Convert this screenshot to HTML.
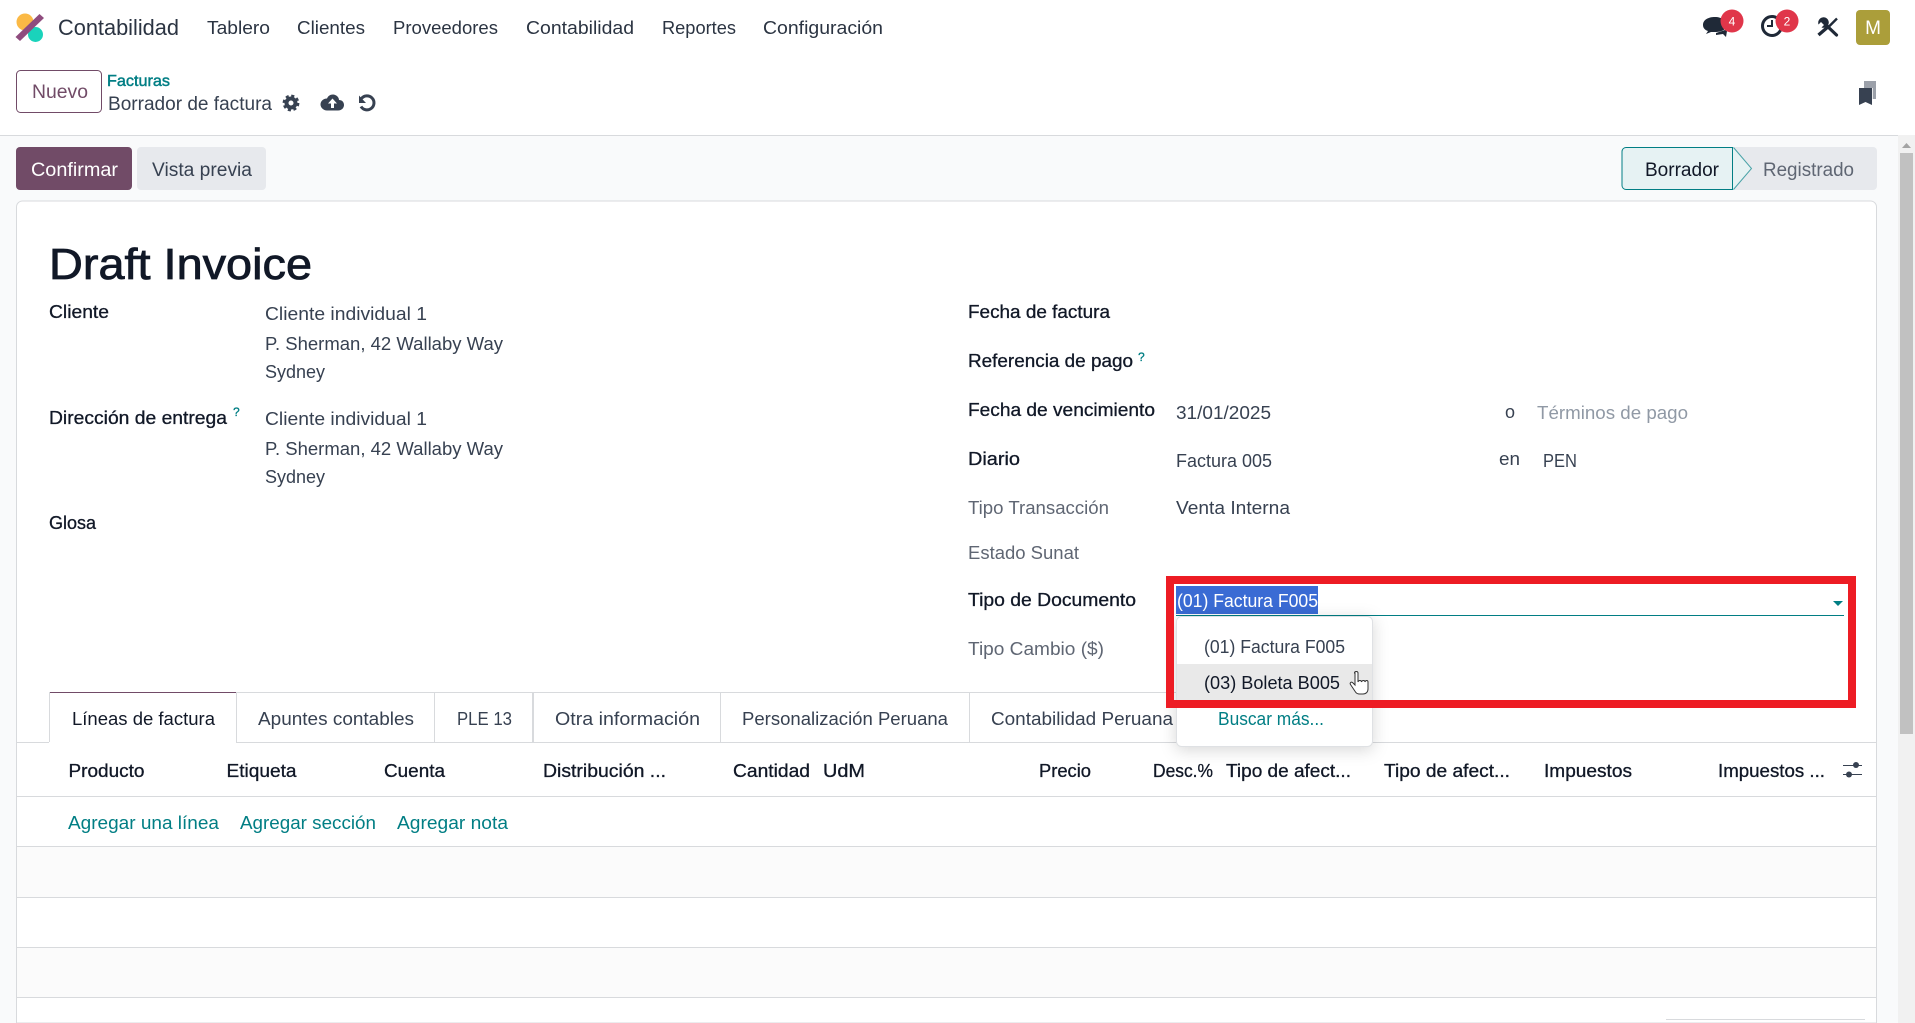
<!DOCTYPE html>
<html lang="es">
<head>
<meta charset="utf-8">
<title>Contabilidad - Borrador de factura</title>
<style>
html,body{margin:0;padding:0;width:1915px;height:1023px;overflow:hidden;background:#fff}
svg{display:block;position:absolute;left:0;top:0}
text{font-family:"Liberation Sans","DejaVu Sans",sans-serif;font-size:18px;fill:#374151;white-space:pre}
.d{fill:#111827}
.m{fill:#111827;stroke:#111827;stroke-width:.3px}
.g{fill:#5f6673}
.l{fill:#9099a5}
.t{fill:#017e84}
.n{font-size:18.500px;fill:#2b3442}
.dd{filter:drop-shadow(0 3px 8px rgba(0,0,0,.16))}
</style>
</head>
<body>
<svg width="1915" height="1023" viewBox="0 0 1915 1023" xmlns="http://www.w3.org/2000/svg">
<rect width="1915" height="1023" fill="#fff"/>

<!-- Page background -->
<rect x="0" y="135" width="1898" height="888" fill="#f9fafb"/>
<rect x="0" y="135" width="1898" height="1" fill="#d8dadd"/>

<!-- Navbar -->
<g>
<circle cx="25" cy="22" r="8.500" fill="#fbb945"/>
<circle cx="35.500" cy="34.500" r="7.500" fill="#1ad3bb"/>
<path d="M39.500 14 L44 18 L20 41 L15.500 37 Z" fill="#8f4c7e"/>
</g>
<text x="58" y="35" style="font-size:22px;fill:#2b3442" textLength="121" lengthAdjust="spacingAndGlyphs">Contabilidad</text>
<text class="n" x="207" y="34" textLength="63" lengthAdjust="spacingAndGlyphs">Tablero</text>
<text class="n" x="297" y="34" textLength="68" lengthAdjust="spacingAndGlyphs">Clientes</text>
<text class="n" x="393" y="34" textLength="105" lengthAdjust="spacingAndGlyphs">Proveedores</text>
<text class="n" x="526" y="34" textLength="108" lengthAdjust="spacingAndGlyphs">Contabilidad</text>
<text class="n" x="662" y="34" textLength="74" lengthAdjust="spacingAndGlyphs">Reportes</text>
<text class="n" x="763" y="34" textLength="120" lengthAdjust="spacingAndGlyphs">Configuración</text>

<!-- Systray -->
<path d="M1715 17c-7 0-12 3-12 8 0 3 2 5 5 6l-2 3 5-2h4c7 0 12-3 12-7s-5-8-12-8z" fill="#1f2937"/>
<path d="M1716 33l9-3 2 1-1 6-3-3-7 1z" fill="#1f2937"/>
<circle cx="1732" cy="21" r="11.500" fill="#e0364a"/>
<text x="1732" y="25.500" text-anchor="middle" style="font-size:12px;fill:#fff">4</text>
<circle cx="1772" cy="26" r="9.500" fill="none" stroke="#1f2937" stroke-width="3"/>
<path d="M1772 20v6h-5" fill="none" stroke="#1f2937" stroke-width="2"/>
<circle cx="1787" cy="21" r="11.500" fill="#e0364a"/>
<text x="1787" y="25.500" text-anchor="middle" style="font-size:12px;fill:#fff">2</text>
<path d="M1826 25l10.500 10" stroke="#1f2937" stroke-width="3.200" stroke-linecap="round"/>
<path d="M1823.500 17.200a5.500 5.500 0 0 0-5 7.300l2.500-2.500 3 3-2.500 2.500a5.500 5.500 0 0 0 7.300-5c0-3-2.500-5.300-5.300-5.300z" fill="#1f2937"/>
<path d="M1837 18.500l-9 9" stroke="#1f2937" stroke-width="2.400"/>
<path d="M1829 26l-10.500 9" stroke="#1f2937" stroke-width="3.400"/>
<rect x="1856" y="10" width="34" height="35" rx="4" fill="#ab9e3a"/>
<text x="1873" y="34" text-anchor="middle" style="font-size:19px;fill:#fff">M</text>

<!-- Control panel -->
<rect x="16.500" y="70.500" width="85" height="42" rx="4" fill="#fff" stroke="#714b67"/>
<text x="32" y="98" style="font-size:19px;fill:#714b67" textLength="56" lengthAdjust="spacingAndGlyphs">Nuevo</text>
<text x="107" y="86" style="font-size:16px;fill:#017e84;stroke:#017e84;stroke-width:.45px" textLength="63" lengthAdjust="spacingAndGlyphs">Facturas</text>
<text x="108" y="110" style="font-size:19px;fill:#374151" textLength="164" lengthAdjust="spacingAndGlyphs">Borrador de factura</text>
<circle cx="291" cy="103" r="4.500" fill="none" stroke="#374151" stroke-width="4"/>
<circle cx="291" cy="103" r="7" fill="none" stroke="#374151" stroke-width="2.800" stroke-dasharray="3 2.500"/>
<path d="M327 110.500h11c4 0 6-3 6-5.500 0-3-2-5-5-5 0-3-3-5.500-6-5.500-3 0-5 1.500-6 4-4 0-6.500 3-6.500 6 0 3 3 6 6.500 6z" fill="#374151"/>
<path d="M332.500 98.500l4.500 5h-3v4.500h-3v-4.500h-3z" fill="#fff"/>
<path d="M361.500 98.500a7 7 0 1 1-.5 8" fill="none" stroke="#374151" stroke-width="3"/>
<path d="M359 95.500l0 7.500 7 0z" fill="#374151"/>
<rect x="1864" y="81" width="12" height="18" fill="#9ca1aa"/>
<rect x="1872" y="88" width="1" height="11" fill="#e6e7e9"/>
<path d="M1859 88h13v17l-6.500-3-6.500 3z" fill="#374151"/>

<!-- Action buttons -->
<rect x="16" y="147" width="116" height="43" rx="4" fill="#714b67"/>
<text x="31" y="176" style="font-size:19px;fill:#fff" textLength="87" lengthAdjust="spacingAndGlyphs">Confirmar</text>
<rect x="137" y="147" width="129" height="43" rx="4" fill="#e7e9ed"/>
<text x="152" y="176" style="font-size:19px;fill:#374151" textLength="100" lengthAdjust="spacingAndGlyphs">Vista previa</text>

<!-- Status bar -->
<path d="M1733 147h140a4 4 0 0 1 4 4v35a4 4 0 0 1-4 4h-140z" fill="#e7e9ed"/>
<path d="M1626 147.500h107.500l18 21-18 21h-107.500a4 4 0 0 1-4-4v-34a4 4 0 0 1 4-4z" fill="#e6f2f3"/>
<path d="M1733.500 147.500l18 21-18 21" fill="none" stroke="#4aa3a8"/>
<path d="M1732.500 147.500h-106.500a4 4 0 0 0-4 4v34a4 4 0 0 0 4 4h106.500z" fill="none" stroke="#017e84"/>
<text class="d" x="1645" y="176" style="font-size:19px" textLength="74" lengthAdjust="spacingAndGlyphs">Borrador</text>
<text x="1763" y="176" style="font-size:19px;fill:#5f6673" textLength="91" lengthAdjust="spacingAndGlyphs">Registrado</text>

<!-- Scrollbar -->
<rect x="1898" y="135" width="17" height="888" fill="#f1f1f1"/>
<path d="M1906.500 143l4.500 5h-9z" fill="#a3a3a3"/>
<rect x="1900" y="153" width="13" height="581" fill="#c1c1c1"/>

<!-- Sheet -->
<path d="M16.500 1023V207a6 6 0 0 1 6-6H1870.500a6 6 0 0 1 6 6V1023z" fill="#fff" stroke="#d8dadd"/>

<text x="49" y="279" style="font-size:44px;fill:#111827;stroke:#111827;stroke-width:.8px" textLength="263" lengthAdjust="spacingAndGlyphs">Draft Invoice</text>

<!-- Left column -->
<text class="m" x="49" y="318" textLength="60" lengthAdjust="spacingAndGlyphs">Cliente</text>
<text x="265" y="320" textLength="162" lengthAdjust="spacingAndGlyphs">Cliente individual 1</text>
<text x="265" y="350" textLength="238" lengthAdjust="spacingAndGlyphs">P. Sherman, 42 Wallaby Way</text>
<text x="265" y="378" textLength="60" lengthAdjust="spacingAndGlyphs">Sydney</text>
<text class="m" x="49" y="424" textLength="178" lengthAdjust="spacingAndGlyphs">Dirección de entrega</text>
<text class="t" x="233" y="416" style="font-size:12px;stroke:#017e84;stroke-width:.3px">?</text>
<text x="265" y="425" textLength="162" lengthAdjust="spacingAndGlyphs">Cliente individual 1</text>
<text x="265" y="455" textLength="238" lengthAdjust="spacingAndGlyphs">P. Sherman, 42 Wallaby Way</text>
<text x="265" y="483" textLength="60" lengthAdjust="spacingAndGlyphs">Sydney</text>
<text class="m" x="49" y="529" textLength="47" lengthAdjust="spacingAndGlyphs">Glosa</text>

<!-- Right column -->
<text class="m" x="968" y="318" textLength="142" lengthAdjust="spacingAndGlyphs">Fecha de factura</text>
<text class="m" x="968" y="367" textLength="165" lengthAdjust="spacingAndGlyphs">Referencia de pago</text>
<text class="t" x="1138" y="361" style="font-size:12px;stroke:#017e84;stroke-width:.3px">?</text>
<text class="m" x="968" y="416" textLength="187" lengthAdjust="spacingAndGlyphs">Fecha de vencimiento</text>
<text class="m" x="968" y="465" textLength="52" lengthAdjust="spacingAndGlyphs">Diario</text>
<text class="g" x="968" y="514" textLength="141" lengthAdjust="spacingAndGlyphs">Tipo Transacción</text>
<text class="g" x="968" y="559" textLength="111" lengthAdjust="spacingAndGlyphs">Estado Sunat</text>
<text class="m" x="968" y="606" textLength="168" lengthAdjust="spacingAndGlyphs">Tipo de Documento</text>
<text class="g" x="968" y="655" textLength="136" lengthAdjust="spacingAndGlyphs">Tipo Cambio ($)</text>

<text x="1176" y="419" textLength="95" lengthAdjust="spacingAndGlyphs">31/01/2025</text>
<text x="1505" y="418">o</text>
<text class="l" x="1537" y="419" textLength="151" lengthAdjust="spacingAndGlyphs">Términos de pago</text>
<text x="1176" y="467" textLength="96" lengthAdjust="spacingAndGlyphs">Factura 005</text>
<text x="1499" y="465" textLength="21" lengthAdjust="spacingAndGlyphs">en</text>
<text x="1543" y="467" textLength="34" lengthAdjust="spacingAndGlyphs">PEN</text>
<text x="1176" y="514" textLength="114" lengthAdjust="spacingAndGlyphs">Venta Interna</text>

<!-- Tabs -->
<rect x="49" y="692" width="1190" height="1" fill="#d8dadd"/>
<rect x="17" y="742" width="1859" height="1" fill="#d8dadd"/>
<rect x="49" y="693" width="187" height="50" fill="#fff"/>
<rect x="49" y="692" width="187" height="1" fill="#714b67"/>
<rect x="49" y="692" width="1" height="50" fill="#d8dadd"/>
<rect x="236" y="692" width="1" height="50" fill="#d8dadd"/>
<rect x="434" y="692" width="1" height="50" fill="#d8dadd"/>
<rect x="532" y="692" width="2" height="50" fill="#d8dadd"/>
<rect x="720" y="692" width="1" height="50" fill="#d8dadd"/>
<rect x="969" y="692" width="1" height="50" fill="#d8dadd"/>
<text class="d" x="72" y="725" textLength="143" lengthAdjust="spacingAndGlyphs">Líneas de factura</text>
<text x="258" y="725" textLength="156" lengthAdjust="spacingAndGlyphs">Apuntes contables</text>
<text x="457" y="725" textLength="55" lengthAdjust="spacingAndGlyphs">PLE 13</text>
<text x="555" y="725" textLength="145" lengthAdjust="spacingAndGlyphs">Otra información</text>
<text x="742" y="725" textLength="206" lengthAdjust="spacingAndGlyphs">Personalización Peruana</text>
<text x="991" y="725" textLength="182" lengthAdjust="spacingAndGlyphs">Contabilidad Peruana</text>

<!-- Table header -->
<text class="m" x="68.500" y="777" textLength="76" lengthAdjust="spacingAndGlyphs">Producto</text>
<text class="m" x="226.500" y="777" textLength="70" lengthAdjust="spacingAndGlyphs">Etiqueta</text>
<text class="m" x="384" y="777" textLength="61" lengthAdjust="spacingAndGlyphs">Cuenta</text>
<text class="m" x="543" y="777" textLength="123" lengthAdjust="spacingAndGlyphs">Distribución ...</text>
<text class="m" x="733" y="777" textLength="77" lengthAdjust="spacingAndGlyphs">Cantidad</text>
<text class="m" x="823" y="777" textLength="42" lengthAdjust="spacingAndGlyphs">UdM</text>
<text class="m" x="1039" y="777" textLength="52" lengthAdjust="spacingAndGlyphs">Precio</text>
<text class="m" x="1153" y="777" textLength="60" lengthAdjust="spacingAndGlyphs">Desc.%</text>
<text class="m" x="1226" y="777" textLength="125" lengthAdjust="spacingAndGlyphs">Tipo de afect...</text>
<text class="m" x="1384" y="777" textLength="126" lengthAdjust="spacingAndGlyphs">Tipo de afect...</text>
<text class="m" x="1544" y="777" textLength="88" lengthAdjust="spacingAndGlyphs">Impuestos</text>
<text class="m" x="1718" y="777" textLength="107" lengthAdjust="spacingAndGlyphs">Impuestos ...</text>
<path d="M1843 765.500h19M1843 774.500h19" stroke="#374151"/>
<circle cx="1856" cy="765" r="3" fill="#374151"/>
<circle cx="1849" cy="774.500" r="3" fill="#374151"/>
<rect x="17" y="796" width="1859" height="1" fill="#d8dadd"/>

<!-- Rows -->
<text class="t" x="68" y="829" textLength="151" lengthAdjust="spacingAndGlyphs">Agregar una línea</text>
<text class="t" x="240" y="829" textLength="136" lengthAdjust="spacingAndGlyphs">Agregar sección</text>
<text class="t" x="397" y="829" textLength="111" lengthAdjust="spacingAndGlyphs">Agregar nota</text>
<rect x="17" y="846" width="1859" height="51" fill="#fbfbfb"/>
<rect x="17" y="947" width="1859" height="50" fill="#fbfbfb"/>
<rect x="17" y="846" width="1859" height="1" fill="#d8dadd"/>
<rect x="17" y="897" width="1859" height="1" fill="#d8dadd"/>
<rect x="17" y="947" width="1859" height="1" fill="#d8dadd"/>
<rect x="17" y="997" width="1859" height="1" fill="#d8dadd"/>
<rect x="1666" y="1019" width="199" height="1" fill="#d8dadd"/>

<!-- Document type input -->
<rect x="1176" y="615" width="668" height="1" fill="#017e84"/>
<rect x="1176" y="586" width="142" height="28" fill="#3a6bd4"/>
<text x="1177" y="607" style="font-size:18px;fill:#fff" textLength="141" lengthAdjust="spacingAndGlyphs">(01) Factura F005</text>
<path d="M1833 601h10l-5 5z" fill="#017e84"/>

<!-- Dropdown -->
<rect class="dd" x="1176.500" y="616.500" width="196" height="130" rx="5" fill="#fff" stroke="#dfe1e4"/>
<rect x="1177" y="664" width="195" height="36" fill="#e9e9e9"/>
<text x="1204" y="653" textLength="141" lengthAdjust="spacingAndGlyphs">(01) Factura F005</text>
<text class="d" x="1204" y="689" textLength="136" lengthAdjust="spacingAndGlyphs">(03) Boleta B005</text>
<text class="t" x="1218" y="725" textLength="106" lengthAdjust="spacingAndGlyphs">Buscar más...</text>
<path d="M1355 673v12l-2.500-2.500c-1.500-1-3 .5-2 2l5 7.500c1 1.500 2.500 2 4 2h3.500c3 0 5-2 5-5v-7c0-2-2.500-2-3 0 0-2-3-2-3.500 0 0-2-3-2-3.500 0v-9c0-2-3.500-2-3.500 0z" fill="#fff" stroke="#333" stroke-width="1"/>

<!-- Highlight frame -->
<rect x="1170" y="580" width="682" height="124" fill="none" stroke="#ed1c24" stroke-width="8"/>
</svg>
</body>
</html>
